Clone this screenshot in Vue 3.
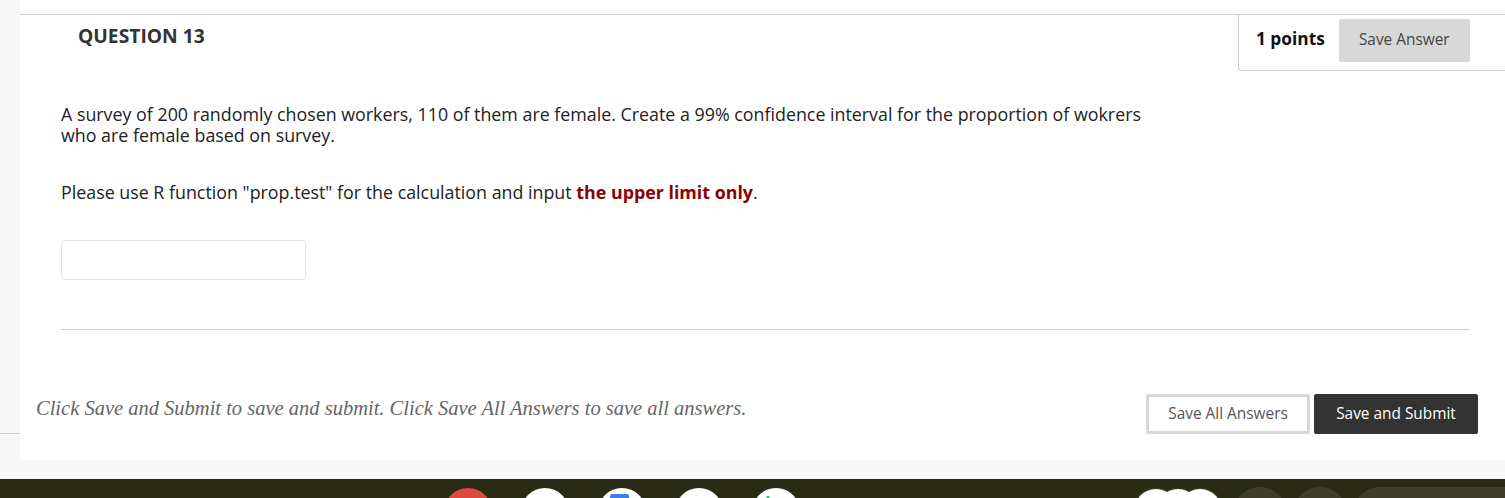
<script setup>
const appIcons = ['red', 'white', 'docs', 'white', 'drive'];
</script>

<template>
  <div class="page">
    <div class="content-row">
      <div class="gutter">
        <span class="gutter__rule" />
      </div>
      <main class="sheet">
        <section class="question">
          <header class="question__head">
            <h2>QUESTION 13</h2>
            <div class="points-box">
              <b>1 points</b>
              <button class="btn btn--grey" type="button">Save Answer</button>
            </div>
          </header>

          <div class="question__body">
            <p>A survey of 200 randomly chosen workers, 110 of them are female. Create a 99% confidence interval for the proportion of wokrers who are female based on survey.</p>
            <p class="question__hint">Please use R function "prop.test" for the calculation and input <strong>the upper limit only</strong>.</p>
            <input class="answer" type="text" />
          </div>
        </section>

        <footer class="submit-row">
          <em>Click Save and Submit to save and submit. Click Save All Answers to save all answers.</em>
          <div class="submit-row__btns">
            <button class="btn btn--outline" type="button">Save All Answers</button>
            <button class="btn btn--dark" type="button">Save and Submit</button>
          </div>
        </footer>
      </main>
    </div>

    <div class="dock">
      <div class="dock__apps">
        <span
          v-for="(icon, index) in appIcons"
          :key="index"
          class="dock__app"
          :class="`dock__app--${icon}`"
        />
      </div>
      <div class="dock__people">
        <span class="dock__person" />
        <span class="dock__person" />
        <span class="dock__person" />
      </div>
      <span class="dock__round" />
      <span class="dock__round" />
      <span class="dock__pill" />
    </div>
  </div>
</template>

<style>
html,
body {
  margin: 0;
  overflow: hidden;
}
</style>

<style scoped>
.page {
  height: 498px;
  overflow: hidden;
  background: #f7f7f7;
  font-family: "Open Sans", "Liberation Sans", sans-serif;
  color: #222222;
}

.content-row {
  display: flex;
  height: 460px;
}

.gutter {
  width: 20px;
  padding-top: 433px;
  box-sizing: border-box;
}

.gutter__rule {
  display: block;
  height: 1px;
  background: #cdcdcd;
}

.sheet {
  flex: 1;
  min-width: 0;
  display: flex;
  flex-direction: column;
  padding-top: 14px;
  background: #ffffff;
  box-sizing: border-box;
}

.question {
  border-top: 1px solid #cdcdcd;
}

.question__head {
  display: flex;
  justify-content: space-between;
  align-items: flex-start;
  padding-left: 58px;
}

.question__head h2 {
  margin: 9px 0 0;
  color: #333333;
  font-size: 19.25px;
  line-height: 24px;
  font-weight: 700;
}

.points-box {
  display: flex;
  align-items: center;
  gap: 14px;
  width: 267px;
  height: 56px;
  padding: 4px 0 9px 17px;
  border: 1px solid #cdcdcd;
  border-top: 0;
  border-right: 0;
  border-radius: 0 0 0 4px;
  box-sizing: border-box;
}

.points-box b {
  margin-bottom: 3px;
  color: #111111;
  font-size: 17.3px;
  line-height: 24px;
}

.btn {
  height: 40px;
  padding: 0;
  border: 0;
  border-radius: 2px;
  font-family: inherit;
  font-size: 15.4px;
  box-sizing: border-box;
}

.btn--grey {
  width: 131px;
  height: 43px;
  padding-bottom: 2px;
  background: #d8d8d8;
  color: #444444;
}

.question__body {
  padding: 33px 35px 0 41px;
  font-size: 17.84px;
  line-height: 21px;
  color: #222222;
}

.question__body p {
  width: 1095px;
  margin: 0;
}

.question__body .question__hint {
  margin-top: 36px;
}

.question__hint strong {
  color: #8b0000;
}

.answer {
  display: block;
  width: 245px;
  height: 40px;
  margin: 37px 0 49px;
  border: 1px solid #e2e2e2;
  border-radius: 4px;
  box-sizing: border-box;
  background: #ffffff;
}

.question__body::after {
  content: "";
  display: block;
  height: 1px;
  background: #cdcdcd;
}

.submit-row {
  display: flex;
  justify-content: space-between;
  align-items: center;
  margin-top: 64px;
  padding: 0 27px 0 16px;
}

.submit-row em {
  margin-bottom: 12px;
  color: #666666;
  font-family: "Liberation Serif", serif;
  font-size: 20.5px;
}

.submit-row__btns {
  display: flex;
  gap: 4px;
}

.btn--outline {
  width: 164px;
  padding-bottom: 2px;
  background: #ffffff;
  border: 3px solid #d8d8d8;
  color: #555555;
}

.btn--dark {
  width: 164px;
  padding-bottom: 2px;
  background: #333333;
  color: #ffffff;
}

.dock {
  display: flex;
  align-items: flex-start;
  height: 19px;
  margin-top: 19px;
  padding-left: 444px;
  overflow: hidden;
  background: #2a2b14;
}

.dock__apps {
  display: flex;
  gap: 29px;
  padding-top: 9px;
}

.dock__app {
  position: relative;
  width: 48px;
  height: 48px;
  border-radius: 50%;
  background: #ffffff;
}

.dock__app--red {
  background: #dc4b41;
}

.dock__app--docs::after {
  content: "";
  position: absolute;
  top: 6px;
  left: 12px;
  width: 19px;
  height: 24px;
  border-radius: 2px;
  background: #3f7ee8;
}

.dock__app--drive::after {
  content: "";
  position: absolute;
  top: 8px;
  left: 13px;
  width: 6px;
  height: 10px;
  background: #2bc47f;
  clip-path: polygon(30% 0, 70% 0, 100% 100%, 0 100%);
}

.dock__people {
  display: flex;
  margin: 10px 0 0 334px;
  filter: drop-shadow(0 0 1px #4a4c38) drop-shadow(0 0 1px #3c3e2a);
}

.dock__person {
  width: 44px;
  height: 44px;
  margin-right: -22px;
  border-radius: 50%;
  background: #ffffff;
}

.dock__person:last-child {
  margin-right: 0;
}

.dock__round {
  flex: none;
  width: 54px;
  height: 54px;
  margin: 8px 0 0 6px;
  border-radius: 50%;
  background: #3c3e2a;
}

.dock__round:first-of-type {
  margin-left: 11px;
}

.dock__pill {
  flex: 1;
  height: 54px;
  margin: 8px 0 0 6px;
  border-radius: 27px 0 0 27px;
  background: #3c3e2a;
}
</style>
